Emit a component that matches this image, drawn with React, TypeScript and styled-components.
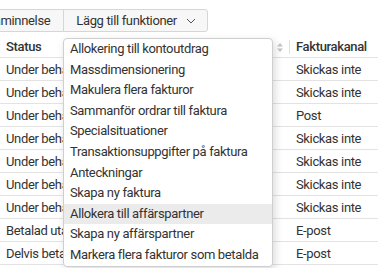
import React from "react";
import styled, { createGlobalStyle } from "styled-components";

const GlobalStyle = createGlobalStyle`
  html, body {
    margin: 0;
    padding: 0;
    background: #fff;
  }
  body {
    font-family: Roboto, "Noto Sans", sans-serif;
    font-size: 13px;
    letter-spacing: -0.35px;
    color: #333;
    overflow: hidden;
  }
`;

const Page = styled.div`
  position: relative;
  width: 378px;
  height: 268px;
  overflow: hidden;
`;

const Toolbar = styled.div`
  display: flex;
  margin: 9px 0 0 -27px;
  height: 23px;
`;

const ToolButton = styled.button<{ $first?: boolean }>`
  display: flex;
  align-items: center;
  gap: 9px;
  height: 23px;
  padding: 0 ${(p) => (p.$first ? "13px" : "11px")} 0 12px;
  margin-left: ${(p) => (p.$first ? "0" : "-1px")};
  border: 1px solid #d6d6d6;
  border-radius: ${(p) => (p.$first ? "3px 0 0 3px" : "0 3px 3px 0")};
  background: #f7f7f7;
  font-family: inherit;
  font-size: 13px;
  letter-spacing: inherit;
  color: #333;
  white-space: nowrap;
`;

const Table = styled.div`
  margin-top: 4px;
`;

const Row = styled.div<{ $head?: boolean }>`
  display: grid;
  grid-template-columns: 150px 140px 1fr;
  height: ${(p) => (p.$head ? "22px" : "23px")};
  border-bottom: 1px solid #e3e3e3;
  box-sizing: border-box;
  font-weight: ${(p) => (p.$head ? 500 : 400)};
`;

const Cell = styled.div`
  position: relative;
  display: flex;
  align-items: center;
  padding: 0 6px;
  white-space: nowrap;
  overflow: hidden;
`;

const HeadCell = styled(Cell)<{ $divider?: boolean }>`
  &::after {
    content: "";
    display: ${(p) => (p.$divider ? "block" : "none")};
    position: absolute;
    right: 0;
    top: 4px;
    bottom: 3px;
    width: 1px;
    background: #e0e0e0;
  }
`;

const SortIcon = styled.svg`
  position: absolute;
  right: 7px;
  top: 7px;
`;

const Menu = styled.ul`
  position: absolute;
  left: 63px;
  top: 38px;
  width: 210px;
  margin: 0;
  padding: 0;
  list-style: none;
  background: #fff;
  border: 1px solid #cfcfcf;
  border-radius: 4px;
  box-shadow: 2px 3px 8px rgba(0, 0, 0, 0.15);
  box-sizing: border-box;
  overflow: hidden;
`;

const MenuItem = styled.li<{ $active?: boolean }>`
  height: 20.6px;
  line-height: 20.6px;
  padding: 0 6px;
  white-space: nowrap;
  background: ${(p) => (p.$active ? "#ebebeb" : "transparent")};
`;

const rows = [
  ["Under behandling", "", "Skickas inte"],
  ["Under behandling", "", "Skickas inte"],
  ["Under behandling", "", "Post"],
  ["Under behandling", "", "Skickas inte"],
  ["Under behandling", "", "Skickas inte"],
  ["Under behandling", "", "Skickas inte"],
  ["Under behandling", "", "Skickas inte"],
  ["Betalad utan avvikelse", "", "E-post"],
  ["Delvis betald", "", "E-post"],
];

const menuItems = [
  "Allokering till kontoutdrag",
  "Massdimensionering",
  "Makulera flera fakturor",
  "Sammanför ordrar till faktura",
  "Specialsituationer",
  "Transaktionsuppgifter på faktura",
  "Anteckningar",
  "Skapa ny faktura",
  "Allokera till affärspartner",
  "Skapa ny affärspartner",
  "Markera flera fakturor som betalda",
];

const App = () => {
  return (
    <Page>
      <GlobalStyle />
      <Toolbar>
        <ToolButton $first>Påminnelse</ToolButton>
        <ToolButton>
          Lägg till funktioner
          <svg width="10" height="6" viewBox="0 0 10 6">
            <path d="M1 1l4 4 4-4" fill="none" stroke="#555" strokeWidth="1" />
          </svg>
        </ToolButton>
      </Toolbar>
      <Table>
        <Row $head>
          <HeadCell>Status</HeadCell>
          <HeadCell $divider>
            Förfallodatum
            <SortIcon width="6" height="9" viewBox="0 0 6 9">
              <path d="M3 0L6 3.5H0z M3 9L0 5.5H6z" fill="#c4c4c4" />
            </SortIcon>
          </HeadCell>
          <HeadCell>Fakturakanal</HeadCell>
        </Row>
        {rows.map((r, i) => (
          <Row key={i}>
            <Cell>{r[0]}</Cell>
            <Cell>{r[1]}</Cell>
            <Cell>{r[2]}</Cell>
          </Row>
        ))}
      </Table>
      <Menu>
        {menuItems.map((m, i) => (
          <MenuItem key={m} $active={i === 8}>
            {m}
          </MenuItem>
        ))}
      </Menu>
    </Page>
  );
};

export default App;
